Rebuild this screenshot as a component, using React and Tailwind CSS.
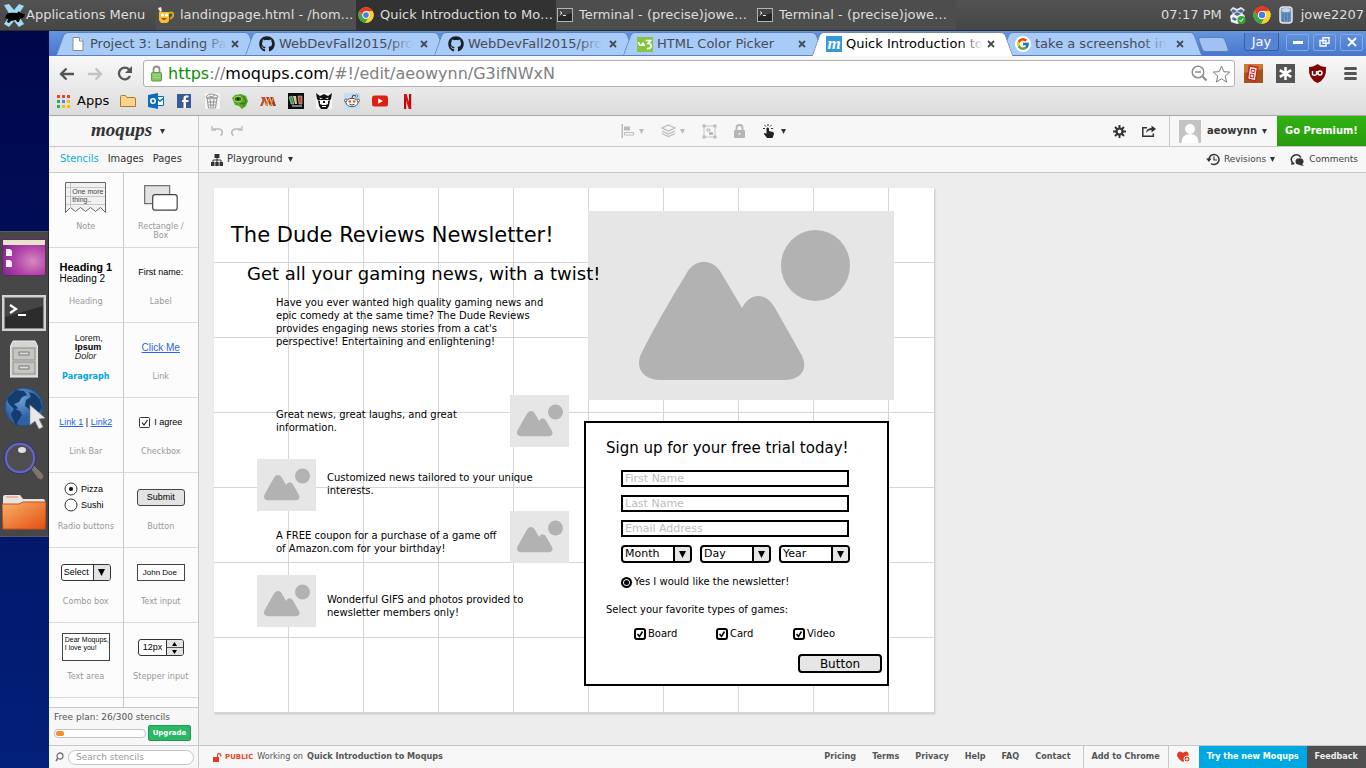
import React from "react";
import { FaGithub } from "react-icons/fa";
import { FcGoogle } from "react-icons/fc";

/* ---------- shared drawings ---------- */

function ChromeLogo({ size }) {
  return (
    <svg width={size} height={size} viewBox="0 0 48 48" aria-hidden="true">
      <circle cx="24" cy="24" r="23" fill="#fbd02e" />
      <path d="M4 12.5A23 23 0 0 1 44 12.5L24 13A11 11 0 0 0 14 28Z" fill="#e2382b" />
      <path d="M4 12.5A23 23 0 0 0 22 47L33 30A11 11 0 0 1 14 29.500Z" fill="#3fa548" />
      <path d="M24 13H44A23 23 0 0 1 22 47L33.500 29.500A11 11 0 0 0 24 13Z" fill="#fbd02e" />
      <circle cx="24" cy="24" r="11" fill="#fff" />
      <circle cx="24" cy="24" r="8.500" fill="#3f7fe0" />
    </svg>
  );
}

function TerminalIcon() {
  return (
    <svg width="16" height="14" viewBox="0 0 16 14" aria-hidden="true">
      <rect x=".5" y=".5" width="15" height="13" fill="#262626" stroke="#b4b4b4" />
      <path d="M1 1h14v4L1 9z" fill="#444" />
      <path d="M3 3.500l2 1.500-2 1.500M6 7.500h3" stroke="#e8e8e8" fill="none" />
    </svg>
  );
}

function Caret({ className = "text-[#333]" }) {
  return (
    <svg className={className} width="5" height="5" viewBox="0 0 5 5" aria-hidden="true">
      <path d="M0 0h5L2.500 5z" fill="currentColor" />
    </svg>
  );
}

/* ---------- desktop panel ---------- */

function Taskbar() {
  return (
    <header className="flex h-[31px] shrink-0 items-center bg-linear-to-b from-[#525252] to-[#464646] border-b border-[#2c2c2c] text-[13px] text-[#dedede]">
      <button className="flex h-full w-[156px] items-center gap-px pl-[3px] whitespace-nowrap">
        <svg width="22" height="23" viewBox="0 0 22 23" aria-hidden="true">
          <path d="M1 1l5-1 5 6 5-6 5 2-6 9 6 9-5 3-5-6-5 6-5-3 6-9z" fill="#9fdcf2" />
          <path d="M3 11c3-3 7-2 11-2l2-2 1 2 5 1-1 3-4 2-1 3h-2l-1-2-5 1-2 2-2-1 1-3-3-1z" fill="#050505" />
        </svg>
        Applications Menu
      </button>
      <button className="flex h-full w-[200px] items-center gap-[6px] bg-[#4f4f4f] pl-px whitespace-nowrap">
        <svg width="17" height="17" viewBox="0 0 17 17" aria-hidden="true">
          <path d="M12 6c5-2 6 3 1 6" stroke="#d9a717" strokeWidth="2" fill="none" />
          <path d="M2 5h10v9l-2 2H4l-2-3z" fill="#f2c12e" />
          <path d="M1 1l3-1 1 4-2 1z" fill="#f6f0d8" />
          <circle cx="5.500" cy="8" r="1.500" fill="#fff" /><circle cx="9.500" cy="8" r="1.500" fill="#fff" />
          <path d="M4 11q3 4 6 0z" fill="#c8322a" />
        </svg>
        landingpage.html - /hom…
      </button>
      <button className="flex h-full w-[200px] items-center gap-[6px] bg-[#323232] pl-[2px] whitespace-nowrap">
        <ChromeLogo size={16} />
        Quick Introduction to Mo…
      </button>
      <button className="flex h-full w-[200px] items-center gap-[6px] bg-[#4d4d4d] pl-px whitespace-nowrap">
        <TerminalIcon />
        Terminal - (precise)jowe…
      </button>
      <button className="flex h-full w-[200px] items-center gap-[6px] bg-[#4d4d4d] pl-px whitespace-nowrap">
        <TerminalIcon />
        Terminal - (precise)jowe…
      </button>
      <div className="ml-auto flex items-center gap-[7px] pr-[2px] whitespace-nowrap">
        <span>07:17 PM</span>
        <svg width="17" height="19" viewBox="0 0 17 19" aria-hidden="true">
          <path d="M4 1l4 2 4-2 4 3-3 3 3 3-2 6-6 2-6-2-1-6 3-3-3-3z" fill="#eee" />
          <path d="M4 3l4 2-3 2-3-2zM12 3l3 2-3 2-4-2zM5 8l3-2 4 2-4 2zM4 11l4 2-2 2-3-2z" fill="#4b6b93" />
          <circle cx="12.500" cy="14" r="4" fill="#35a535" />
          <path d="M10.500 14l1.500 1.500 2.500-3" stroke="#fff" fill="none" />
        </svg>
        <ChromeLogo size={18} />
        <svg className="mx-px" width="14" height="18" viewBox="0 0 14 18" aria-hidden="true">
          <rect x="1" y="1" width="12" height="16" rx="3" fill="#6f94c4" stroke="#e6e6e6" strokeWidth="1.500" />
          <ellipse cx="7" cy="4" rx="4.500" ry="2" fill="#c9d8ec" />
          <path d="M4 7v8M7 7v8M10 7v8" stroke="#44689b" />
        </svg>
        <span>jowe2207</span>
      </div>
    </header>
  );
}

function Dock() {
  return (
    <nav className="absolute top-[200px] left-0 flex h-[306px] w-[49px] flex-col items-center border-y border-r border-[#5a5a5a] border-r-[#2b2b2b] bg-[#474747]">
      <svg className="mt-[7px]" width="44" height="38" viewBox="0 0 44 38" aria-hidden="true">
        <defs>
          <radialGradient id="dk1" cx=".7" cy=".6" r=".8"><stop offset="0" stopColor="#d987c0" /><stop offset=".5" stopColor="#b144a8" /><stop offset="1" stopColor="#7d2786" /></radialGradient>
        </defs>
        <rect x=".5" y=".5" width="43" height="36" rx="2" fill="url(#dk1)" stroke="#6b2370" />
        <path d="M1 1h42v5H1z" fill="#e9e4c9" />
        <path d="M4 10h4l2 2v5H4zM4 21h4l2 2v5H4z" fill="#fbeef8" />
      </svg>
      <svg className="mt-[18px]" width="44" height="37" viewBox="0 0 44 37" aria-hidden="true">
        <rect x="1" y="1" width="42" height="34" fill="#2c2c2c" stroke="#d3d3d3" strokeWidth="2" />
        <rect x="2.500" y="2.500" width="39" height="31" fill="none" stroke="#8c8c8c" />
        <path d="M3 3h38v8L3 22z" fill="#454545" />
        <path d="M8 10l6 4-6 4M16 20h8" stroke="#fff" strokeWidth="2.200" fill="none" />
      </svg>
      <svg className="mt-[8px]" width="28" height="38" viewBox="0 0 28 38" aria-hidden="true">
        <path d="M3 1h22l3 6v30H0V7z" fill="#d4d5d0" stroke="#efefec" />
        <rect x="3" y="8" width="22" height="12" fill="#c5c6c1" stroke="#8b8c88" />
        <rect x="3" y="22" width="22" height="12" fill="#c5c6c1" stroke="#8b8c88" />
        <path d="M9 12h10v3H9zM9 26h10v3H9z" fill="#dcdcd8" stroke="#777" />
      </svg>
      <svg className="mt-[9px] ml-[2px]" width="42" height="43" viewBox="0 0 42 43" aria-hidden="true">
        <defs><radialGradient id="dk2" cx=".4" cy=".3"><stop offset="0" stopColor="#6d9fd4" /><stop offset="1" stopColor="#2d61a3" /></radialGradient></defs>
        <circle cx="20" cy="20" r="19" fill="url(#dk2)" stroke="#214c86" />
        <path d="M6 8l6-5 8 1 3 4-5 2-3 5-5 2 4 4-3 2-6-6-2-5zM10 22l6 2 2 4-4 6-2 5-3-7-2-5zM25 5l6 2 5 6 2 8-4 5-6 2-3-6-4-3 1-6 5-3z" fill="#153d6c" />
        <path d="M26 18v20l5-4 4 8 4-2-4-8 6-1z" fill="#e8e8e8" stroke="#8b8b8b" strokeWidth=".7" />
      </svg>
      <svg className="mt-[11px]" width="42" height="42" viewBox="0 0 42 42" aria-hidden="true">
        <path d="M27 27l4-3 9 9q2 3 0 5-2 2-5 0z" fill="#7c766c" stroke="#45413b" />
        <circle cx="17" cy="17" r="14.500" fill="#4e4e50" stroke="#6464b8" strokeWidth="3" />
        <circle cx="17" cy="17" r="16" fill="none" stroke="#2b2f78" />
        <ellipse cx="19" cy="9" rx="4" ry="3" fill="#f2f2f2" opacity=".9" />
      </svg>
      <svg className="mt-[11px]" width="44" height="36" viewBox="0 0 44 36" aria-hidden="true">
        <defs><linearGradient id="dk3" x1="0" y1="0" x2="1" y2="1"><stop offset="0" stopColor="#f9b06c" /><stop offset="1" stopColor="#e2500f" /></linearGradient></defs>
        <path d="M1 3q0-2 2-2h15l3 4h20q2 0 2 2v8H1z" fill="#e9e4df" />
        <path d="M4 3h12" stroke="#ee8d5e" />
        <path d="M0 10h17l4-2h23l-1 27H1z" fill="url(#dk3)" stroke="#c7501a" />
      </svg>
    </nav>
  );
}

/* ---------- browser chrome ---------- */

const TABS = [
  { icon: "page", label: "Project 3: Landing Pa" },
  { icon: "github", label: "WebDevFall2015/pro" },
  { icon: "github", label: "WebDevFall2015/pro" },
  { icon: "w3", label: "HTML Color Picker", whole: true },
  { icon: "moqups", label: "Quick Introduction to", active: true },
  { icon: "google", label: "take a screenshot in" },
];

function Favicon({ kind }) {
  if (kind === "github") return <FaGithub size={16} color="#1b1f27" />;
  if (kind === "google")
    return <span className="rounded-full bg-white p-px"><FcGoogle size={14} /></span>;
  if (kind === "w3")
    return (
      <svg width="16" height="15" viewBox="0 0 16 15" aria-hidden="true">
        <rect width="16" height="15" fill="#86c440" />
        <path d="M1.500 5q.5 3.500 2.500 3.500T6 5.500q.3 3 2 3M8.500 3.500h5L11 6.500q3.500 0 3.200 3-.5 2.500-4.200 2" stroke="#fff" strokeWidth="1.700" fill="none" />
      </svg>
    );
  if (kind === "moqups")
    return (
      <span className="flex size-4 items-center justify-center bg-[#3498db] font-['Liberation_Serif',serif] text-[17px] leading-[12px] font-bold italic text-white">m</span>
    );
  return (
    <svg width="16" height="16" viewBox="0 0 16 16" aria-hidden="true">
      <path d="M3 1.500h6.500L13 5v9.500H3z" fill="#fff" stroke="#8a8a8a" />
      <path d="M9.500 1.500V5H13" fill="#eee" stroke="#8a8a8a" />
    </svg>
  );
}

function BrowserTab({ tab }) {
  const edge = tab.active
    ? "before:bg-white before:border-[#6d86b0] after:bg-white after:border-[#6d86b0] text-black z-10"
    : "before:bg-[#a9cbf7] before:border-b before:border-[#5c80bd] after:bg-[#a9cbf7] after:border-b after:border-[#5c80bd] text-[#454c57]";
  const fade = tab.active ? "to-white" : "to-[#a9cbf7]";
  return (
    <div
      className={`relative flex h-[24px] w-[189px] shrink-0 items-center pl-[12px] pr-[8px] before:absolute before:inset-y-0 before:left-[2px] before:w-[60%] before:-skew-x-[20deg] before:rounded-tl-[4px] before:border-t before:border-l before:content-[''] after:absolute after:inset-y-0 after:right-[-6px] after:w-[60%] after:skew-x-[20deg] after:rounded-tr-[4px] after:border-t after:border-r after:content-[''] ${edge}`}
    >
      <a href="#tab" className="relative z-10 flex min-w-0 flex-1 items-center gap-[4px]">
        <span className="flex w-4 shrink-0 justify-center"><Favicon kind={tab.icon} /></span>
        <span className="relative text-[13px] whitespace-nowrap">
          {tab.label}
          {!tab.whole && <span className={`absolute inset-y-0 right-0 w-[24px] bg-linear-to-r from-transparent ${fade}`} />}
        </span>
      </a>
      <button aria-label="Close tab" className="relative z-10">
        <svg width="8" height="8" viewBox="0 0 8 8" aria-hidden="true"><path d="M1 1l6 6M7 1L1 7" stroke="#444b55" strokeWidth="1.800" /></svg>
      </button>
    </div>
  );
}

function TabStrip() {
  return (
    <div className="flex h-[25px] shrink-0 items-end overflow-hidden bg-linear-to-b from-[#6595dd] to-[#4876cb] pl-[9px]">
      {TABS.map((t, i) => <BrowserTab key={i} tab={t} />)}
      <button aria-label="New tab" className="mb-[4px] ml-[8px] h-[15px] w-[27px] skew-x-[20deg] rounded-[3px] border border-[#5c80bd] bg-[#9fc2f2]" />
      <div className="mb-[5px] ml-auto flex items-center gap-[4px] pr-[3px]">
        <button className="mr-[3px] h-[18px] w-[35px] rounded-b-[3px] border border-t-0 border-[#365ea8] bg-[#5683d2] text-[13px] leading-[16px] text-white">Jay</button>
        <button aria-label="Minimize" className="flex h-[17px] w-[23px] items-center justify-center rounded-[2px] border border-[#83a8e6]">
          <svg width="10" height="3" aria-hidden="true"><path d="M0 0h10v3H0z" fill="#fff" /></svg>
        </button>
        <button aria-label="Restore" className="flex h-[17px] w-[23px] items-center justify-center rounded-[2px] border border-[#83a8e6]">
          <svg width="11" height="10" viewBox="0 0 11 10" aria-hidden="true"><path d="M4 .75h6v5.500H4zM1 3.500h6V9H1z" stroke="#fff" strokeWidth="1.300" fill="#5685d6" /></svg>
        </button>
        <button aria-label="Close" className="flex h-[17px] w-[23px] items-center justify-center rounded-[2px] border border-[#83a8e6]">
          <svg width="10" height="10" viewBox="0 0 10 10" aria-hidden="true"><path d="M1 1l8 8M9 1L1 9" stroke="#fff" strokeWidth="1.800" /></svg>
        </button>
      </div>
    </div>
  );
}

function AddressRow() {
  return (
    <div className="flex items-center pt-[4px] pl-[10px] pr-[8px]">
      <button aria-label="Back" className="w-[29px]">
        <svg width="15" height="14" viewBox="0 0 15 14" aria-hidden="true"><path d="M7.500 1.500L2 7l5.500 5.500M2 7h13" stroke="#555" strokeWidth="2.400" fill="none" /></svg>
      </button>
      <button aria-label="Forward" className="w-[29px]">
        <svg width="15" height="14" viewBox="0 0 15 14" aria-hidden="true"><path d="M7.500 1.500L13 7l-5.500 5.500M13 7H0" stroke="#c2c2c2" strokeWidth="2.400" fill="none" /></svg>
      </button>
      <button aria-label="Reload" className="w-[26px]">
        <svg width="16" height="15" viewBox="0 0 16 15" aria-hidden="true">
          <path d="M12 3.500A5.800 5.800 0 1 0 13 10" stroke="#555" strokeWidth="2.300" fill="none" />
          <path d="M15 0v7H8z" fill="#555" />
        </svg>
      </button>
      <div className="flex h-[27px] flex-1 items-center rounded-[3px] border border-[#b1b1b1] bg-white pr-[3px] pl-[6px]">
        <svg width="13" height="17" viewBox="0 0 13 17" aria-hidden="true">
          <path d="M3.500 8V4.500a3 3 0 0 1 6 0V8" stroke="#8f8f8f" strokeWidth="1.800" fill="none" />
          <rect x="1.500" y="7.500" width="10" height="8.500" rx="1" fill="#86c565" stroke="#5f9c42" />
          <path d="M3 10h7M3 12.500h7" stroke="#a6d98c" />
        </svg>
        <div className="ml-[5px] flex-1 text-[16px] leading-[20px] whitespace-nowrap text-[#808080]">
          <span className="text-[#0a9000]">https</span>://<span className="text-black">moqups.com</span>/#!/edit/aeowynn/G3ifNWxN
        </div>
        <svg className="mr-[4px]" width="17" height="17" viewBox="0 0 17 17" aria-hidden="true">
          <circle cx="7" cy="7" r="5.800" stroke="#8e8e8e" strokeWidth="1.500" fill="none" />
          <path d="M11.500 11.500l4 4" stroke="#8e8e8e" strokeWidth="2.200" /><path d="M4 7h6" stroke="#8e8e8e" strokeWidth="1.500" />
        </svg>
        <svg width="19" height="18" viewBox="0 0 19 18" aria-hidden="true">
          <path d="M9.500 1l2.300 5.700 6 .4-4.600 4 1.500 6-5.200-3.300L4.300 17l1.500-6-4.600-4 6-.3z" stroke="#7d7d7d" fill="#fff" strokeLinejoin="round" />
        </svg>
      </div>
      <div className="flex items-center gap-[13px] pl-[9px]">
        <svg width="19" height="19" viewBox="0 0 19 19" aria-hidden="true">
          <path d="M0 0h19v19H0z" fill="#a0561b" /><path d="M0 0h19v5L0 9z" fill="#c67a32" />
          <path d="M5.500 2l8 1.500L11.500 17l-8-2z" fill="#fff" stroke="#d8201c" strokeWidth="1.600" />
          <path d="M7.500 5l3.500.6-.5 3-3.500-.6zM6.500 10l3.500.6-.6 3.400-3.400-.7z" fill="#fff" stroke="#d8201c" />
        </svg>
        <svg width="19" height="19" viewBox="0 0 19 19" aria-hidden="true">
          <path d="M0 0h19v19H0z" fill="#555" />
          <path d="M9.500 3v13M3.800 6.200l11.400 6.600M15.200 6.200L3.800 12.800" stroke="#fff" strokeWidth="2.600" />
        </svg>
        <svg width="19" height="19" viewBox="0 0 19 19" aria-hidden="true">
          <path d="M9.500 0Q13 3 18 3q1 12-8.500 16Q0 15 1 3q5 0 8.500-3z" fill="#7f0505" />
          <path d="M4.500 7v3.500q1.500 1.500 4 0V7M9 10.500V7" stroke="#fff" strokeWidth="1.400" fill="none" />
          <circle cx="12" cy="9" r="2" stroke="#fff" strokeWidth="1.400" fill="none" />
        </svg>
        <button aria-label="Browser menu" className="ml-[3px] flex w-[15px] flex-col items-center gap-[2px]">
          <span className="h-[3px] w-[13px] rounded-sm bg-[#555]" />
          <span className="h-[3px] w-[13px] rounded-sm bg-[#555]" />
          <span className="h-[3px] w-[13px] rounded-sm bg-[#555]" />
        </button>
      </div>
    </div>
  );
}

const APP_DOTS = ["#ea4335", "#ea4335", "#ea4335", "#34a853", "#4285f4", "#fbbc05", "#34a853", "#fbbc05", "#fbbc05"];

function Bookmarks() {
  return (
    <nav className="flex items-center gap-[12px] pt-[6px] pl-[8px] text-[13px] leading-[16px] text-black">
      <a href="#apps" className="mr-[-1px] flex items-center gap-[7px]">
        <svg width="13" height="13" viewBox="0 0 13 13" aria-hidden="true">
          {APP_DOTS.map((c, i) => (
            <rect key={i} x={(i % 3) * 5} y={Math.floor(i / 3) * 5} width="3" height="3" fill={c} />
          ))}
        </svg>
        Apps
      </a>
      <svg width="16" height="16" viewBox="0 0 16 16" aria-hidden="true"><path d="M.5 3.500q0-1 1-1h4l1.500 2h7q1.500 0 1.500 1.500v7.500H.5z" fill="#fbd48a" stroke="#a67c3c" /></svg>
      <svg width="16" height="16" viewBox="0 0 16 16" aria-hidden="true">
        <path d="M7.500 3.500h8v9h-8z" fill="#fff" stroke="#0a6cbd" /><path d="M8 5l4 3 4-3" stroke="#0a6cbd" strokeWidth="1.500" fill="none" />
        <path d="M0 2l10-2v16L0 14z" fill="#0a6cbd" /><circle cx="5" cy="8" r="2.200" stroke="#fff" strokeWidth="1.600" fill="none" />
      </svg>
      <svg width="16" height="16" viewBox="0 0 16 16" aria-hidden="true"><path d="M1 1h14v14H1z" fill="#3b5998" /><path d="M10 15V9h2.500V7H10V5.500q0-1 1-1h1.500v-2H10q-2.500 0-2.500 2.500v2H6v2h1.500v6z" fill="#fff" /></svg>
      <svg width="16" height="16" viewBox="0 0 16 16" aria-hidden="true">
        <path d="M1 0h15v16H1z" fill="#f4f4f4" />
        <path d="M3 5l1.500 10h7L13 5zM2 4q2-4 6-3t6 2l-1 2H3zM6 6l1 8M10 6L9 14M4 9h8M4.500 12h7M5 3l3 1 3-2" stroke="#8a8a8a" strokeWidth=".9" fill="none" />
      </svg>
      <svg width="16" height="16" viewBox="0 0 16 16" aria-hidden="true">
        <path d="M0 5l3-3 6-1 5 2 2 5-2 5-4 3-3-3-4-1z" fill="#58a52a" />
        <ellipse cx="6" cy="6" rx="4" ry="2.800" fill="#2f7012" stroke="#a5dd68" /><circle cx="6" cy="6" r="1.200" fill="#0d2f04" />
        <path d="M11 3l3 5-3 5M8 11l4-1" stroke="#2f7012" fill="none" />
      </svg>
      <svg width="16" height="16" viewBox="0 0 16 16" aria-hidden="true">
        <path d="M1 4h4l3 9H6L4.500 8 2.500 13H0l2.500-6z" fill="#c0532a" /><path d="M6 4h3l3 9h-2zM10 4h3l3 9h-3z" fill="#a93a1b" /><path d="M9 5L6.500 13M13 5l-2.500 8" stroke="#e59a3c" strokeWidth="1.200" />
      </svg>
      <svg width="16" height="16" viewBox="0 0 16 16" aria-hidden="true"><path d="M0 0h16v16H0z" fill="#0c0c0c" /><path d="M1 4l3-1 2 8H3z" fill="#3e9a5e" stroke="#cfe6d0" strokeWidth=".5" /><path d="M5 3h3l1 8H7z" fill="#d9c9a4" /><path d="M10 3h4v8h-3z" fill="#a9542d" stroke="#e8dcc8" strokeWidth=".5" /><path d="M4 13h10" stroke="#eee" /></svg>
      <svg width="16" height="16" viewBox="0 0 16 16" aria-hidden="true">
        <path d="M0 0h16v16H0z" fill="#f5f5f5" />
        <path d="M0 0l4 3 4-2 4 2 4-3-1 6-1 1H2L1 6z" fill="#111" />
        <path d="M2 7l2 1v3l2 1h4l2-1V8l2-1-1 6-2 3H5l-2-3z" fill="#111" />
        <path d="M3.500 4.500L7 6H4zM12.500 4.500L9 6h3z" fill="#fff" /><path d="M7 8h2v2H7z" fill="#111" /><path d="M6 13.500h4" stroke="#fff" />
      </svg>
      <svg width="16" height="16" viewBox="0 0 16 16" aria-hidden="true">
        <path d="M0 0h16v16H0z" fill="#c6dff5" />
        <circle cx="2" cy="7.500" r="1.500" fill="#fff" stroke="#444" strokeWidth=".8" /><circle cx="14" cy="7.500" r="1.500" fill="#fff" stroke="#444" strokeWidth=".8" />
        <ellipse cx="8" cy="9.500" rx="6" ry="4.200" fill="#fff" stroke="#444" strokeWidth=".9" /><path d="M8 5l1-3 3 1" stroke="#444" fill="none" />
        <circle cx="12.500" cy="3" r="1.300" fill="#fff" stroke="#444" strokeWidth=".7" /><circle cx="5.800" cy="8.500" r="1.300" fill="#f0471d" /><circle cx="10.200" cy="8.500" r="1.300" fill="#f0471d" />
        <path d="M5.500 11.300q2.500 1.500 5 0" stroke="#444" fill="none" />
      </svg>
      <svg width="16" height="16" viewBox="0 0 16 16" aria-hidden="true"><rect y="2.500" width="16" height="11" rx="2.500" fill="#dc2018" /><path d="M6.200 5.200v5.600L11 8z" fill="#fff" /></svg>
      <svg width="16" height="16" viewBox="0 0 16 16" aria-hidden="true"><path d="M4 1h2.200v15H4zM9 1h2.200v15H9z" fill="#b3060e" /><path d="M4 1h2.500l4.700 15H8.700z" fill="#e50914" /></svg>
    </nav>
  );
}

/* ---------- sidebar ---------- */

function StencilArt({ kind }) {
  switch (kind) {
    case "note":
      return (
        <span className="relative block h-[32px] w-[41px] pt-[6px] pl-[7px] text-left text-[7px] leading-[8px] text-[#444]">
          <svg className="absolute inset-0" width="41" height="32" viewBox="0 0 41 32" aria-hidden="true">
            <path d="M.5.500h40v30l-5-5-5 4-5-4-5 4-5-4-5 4-5-4-5 5z" fill="#f1f1f1" stroke="#666" />
            <path d="M1 5.500h39M1 14.500h39M1 22.500h39M5.500 1v25" stroke="#c6c6c6" />
          </svg>
          <span className="relative block whitespace-nowrap">One more</span>
          <span className="relative block">thing..</span>
        </span>
      );
    case "rect":
      return (
        <svg width="34" height="26" viewBox="0 0 34 26" aria-hidden="true">
          <rect x=".7" y=".7" width="25" height="18" fill="#e3e3e3" stroke="#555" />
          <rect x="8.700" y="9.700" width="24.500" height="15.500" rx="2.500" fill="#fff" stroke="#444" strokeWidth="1.200" />
        </svg>
      );
    case "heading":
      return (
        <span className="block text-left text-[10px] leading-[11px] text-black">
          <b className="block text-[11px] whitespace-nowrap">Heading 1</b>Heading 2
        </span>
      );
    case "label":
      return <span className="text-[9px] whitespace-nowrap text-black">First name:</span>;
    case "paragraph":
      return (
        <span className="block pl-[6px] text-left text-[9px] leading-[9px] text-[#222]">
          Lorem,<b className="block text-black">Ipsum</b><i>Dolor</i>
        </span>
      );
    case "link":
      return <span className="text-[10px] text-[#2a62e8] underline">Click Me</span>;
    case "linkbar":
      return (
        <span className="text-[9px] whitespace-nowrap text-black">
          <span className="text-[#2a62e8] underline">Link 1</span> | <span className="text-[#2a62e8] underline">Link2</span>
        </span>
      );
    case "checkbox":
      return (
        <span className="flex items-center gap-[4px] text-[9px] whitespace-nowrap text-black">
          <svg width="11" height="11" viewBox="0 0 11 11" aria-hidden="true"><rect x=".5" y=".5" width="10" height="10" rx="1" fill="#fff" stroke="#333" /><path d="M3 5.500L5 8l3.500-5" stroke="#222" strokeWidth="1.200" fill="none" /></svg>
          I agree
        </span>
      );
    case "radio":
      return (
        <span className="-mt-[2px] flex flex-col gap-[2px] pr-[4px] text-left text-[9px] leading-[14px] text-black">
          <span className="flex items-center gap-[3px]"><svg width="14" height="14" viewBox="0 0 14 14" aria-hidden="true"><circle cx="7" cy="7" r="6" fill="#fff" stroke="#333" /><circle cx="7" cy="7" r="2" fill="#000" /></svg>Pizza</span>
          <span className="flex items-center gap-[3px]"><svg width="14" height="14" viewBox="0 0 14 14" aria-hidden="true"><circle cx="7" cy="7" r="6" fill="#fff" stroke="#333" /></svg>Sushi</span>
        </span>
      );
    case "button":
      return <span className="block h-[17px] w-[48px] rounded-[3px] border border-[#444] bg-[#e3e3e3] text-center text-[9px] leading-[15px] text-black">Submit</span>;
    case "combo":
      return (
        <span className="flex h-[17px] w-[50px] overflow-hidden rounded-[3px] border border-[#333] bg-white text-[9px] leading-[15px] text-black">
          <span className="flex-1 pl-[2px] text-left">Select</span>
          <span className="flex w-[17px] items-center justify-center border-l border-[#333] bg-[#e3e3e3]"><svg width="7" height="7" viewBox="0 0 7 7" aria-hidden="true"><path d="M0 0h7L3.500 7z" /></svg></span>
        </span>
      );
    case "input":
      return <span className="block h-[17px] w-[48px] border border-[#444] bg-white pl-[5px] text-left text-[8px] leading-[15px] whitespace-nowrap text-black">John Doe</span>;
    case "area":
      return <span className="-mt-[2px] block h-[28px] w-[48px] border border-[#444] bg-white pt-[2px] pl-[2px] text-left text-[7px] leading-[8px] whitespace-nowrap text-black">Dear Moqups,<br />I love you!</span>;
    default:
      return (
        <span className="flex h-[17px] w-[46px] overflow-hidden rounded-[3px] border border-[#333] bg-white text-[9px] leading-[15px] text-black">
          <span className="flex-1 pl-[4px] text-left">12px</span>
          <span className="flex w-[17px] flex-col items-center justify-evenly border-l border-[#333] bg-[#e3e3e3]">
            <svg width="5" height="4" viewBox="0 0 5 4" aria-hidden="true"><path d="M0 4h5L2.500 0z" /></svg>
            <span className="h-px w-full bg-[#555]" />
            <svg width="5" height="4" viewBox="0 0 5 4" aria-hidden="true"><path d="M0 0h5L2.500 4z" /></svg>
          </span>
        </span>
      );
  }
}

const STENCILS = [
  ["note", "Note"], ["rect", "Rectangle / Box"], ["heading", "Heading"], ["label", "Label"],
  ["paragraph", "Paragraph"], ["link", "Link"], ["linkbar", "Link Bar"], ["checkbox", "Checkbox"],
  ["radio", "Radio buttons"], ["button", "Button"], ["combo", "Combo box"], ["input", "Text input"],
  ["area", "Text area"], ["stepper", "Stepper input"],
];

function Sidebar() {
  return (
    <aside className="flex w-[150px] shrink-0 flex-col border-r border-[#c8c8c8] bg-[#f7f7f7]">
      <button className="flex h-[31px] shrink-0 items-center justify-center gap-[8px] border-b border-[#c8c8c8] pl-[9px]">
        <span className="pb-[2px] font-['Liberation_Serif',serif] text-[19px] leading-[20px] font-bold italic text-[#333]">moqups</span>
        <Caret />
      </button>
      <div className="flex h-[26px] shrink-0 items-center gap-[9px] border-b border-[#c8c8c8] pl-[11px] font-['DejaVu_Sans_Condensed','DejaVu_Sans',sans-serif] text-[11px] text-[#333]">
        <button className="text-[#0fa8e0]">Stencils</button>
        <button>Images</button>
        <button>Pages</button>
      </div>
      <div className="min-h-0 flex-1 overflow-hidden bg-[#fcfcfc]">
        <div className="grid grid-cols-2">
          {STENCILS.map(([kind, label]) => (
            <button key={kind} className="flex h-[75px] flex-col items-center border-b border-[#dadada] odd:border-r odd:border-r-[#c8c8c8]">
              <span className="flex h-[49px] items-center justify-center font-['Liberation_Sans',sans-serif]"><StencilArt kind={kind} /></span>
              <span className={kind === "paragraph"
                ? "w-[54px] text-center font-['DejaVu_Sans_Condensed','DejaVu_Sans',sans-serif] text-[9px] leading-[9px] font-bold text-[#00a7df]"
                : "max-w-[62px] text-center font-['DejaVu_Sans_Condensed','DejaVu_Sans',sans-serif] text-[9px] leading-[9px] text-[#999]"}>{label}</span>
            </button>
          ))}
          <span className="h-[20px] border-r border-[#c8c8c8]" />
        </div>
      </div>
      <div className="h-[38px] shrink-0 border-t border-[#c8c8c8] px-[5px] pt-[3px] text-[9px] text-[#555]">
        <div className="leading-[12px] whitespace-nowrap">Free plan: 26/300 stencils</div>
        <div className="mt-[2px] flex items-center gap-[2px]">
          <div className="h-[9px] flex-1 rounded-[4px] border border-[#c4c4c4] bg-white p-px"><div className="h-full w-[8px] rounded-[2px] bg-[#f78f28]" /></div>
          <button className="mr-[2px] h-[16px] w-[43px] rounded-[2px] border border-[#219a53] bg-[#2bb766] text-[7px] leading-[12px] font-bold text-white">Upgrade</button>
        </div>
      </div>
      <label className="flex h-[23px] shrink-0 items-center gap-[4px] border-t border-[#c8c8c8] pr-[4px] pl-[6px]">
        <svg width="9" height="10" viewBox="0 0 9 10" aria-label="Search"><circle cx="5" cy="4" r="3" stroke="#777" strokeWidth="1.300" fill="none" /><path d="M3 6L1 9" stroke="#777" strokeWidth="1.600" /></svg>
        <input placeholder="Search stencils" className="h-[15px] min-w-0 flex-1 rounded-full border border-[#c4c4c4] bg-white px-[7px] text-[9px] outline-none placeholder:text-[#999]" />
      </label>
    </aside>
  );
}

/* ---------- editor bars ---------- */

function EditorBar() {
  return (
    <div className="flex h-[31px] shrink-0 items-center border-b border-[#c8c8c8] bg-[#f7f7f7] pl-[12px]">
      <div className="flex w-[410px] shrink-0 gap-[8px]">
        <button aria-label="Undo"><svg width="12" height="12" viewBox="0 0 12 12" aria-hidden="true"><path d="M2 4h5.500a3.500 3.500 0 0 1 2 6.500" stroke="#bbb" strokeWidth="1.600" fill="none" /><path d="M1 1v4h4" stroke="#bbb" strokeWidth="1.300" fill="none" /></svg></button>
        <button aria-label="Redo"><svg width="12" height="12" viewBox="0 0 12 12" aria-hidden="true"><path d="M10 4H4.500a3.500 3.500 0 0 0-2 6.500" stroke="#bbb" strokeWidth="1.600" fill="none" /><path d="M11 1v4H7" stroke="#bbb" strokeWidth="1.300" fill="none" /></svg></button>
      </div>
      <div className="flex items-center">
        <button aria-label="Align" className="flex w-[40px] items-center gap-[5px]">
          <svg width="13" height="14" viewBox="0 0 13 14" aria-hidden="true"><path d="M.5 0H2v14H.5zM3 2.500h6v4H3z" fill="#bbb" /><path d="M3.500 8.500h9v2.500h-9z" stroke="#bbb" fill="none" /></svg>
          <Caret className="text-[#bbb]" />
        </button>
        <button aria-label="Arrange" className="flex w-[40px] items-center gap-[4px]">
          <svg width="15" height="14" viewBox="0 0 15 14" aria-hidden="true"><path d="M7.500 1L14 4 7.500 7 1 4zM1 7l6.500 3L14 7M1 9.500l6.500 3 6.500-3" stroke="#bbb" strokeWidth="1.200" fill="none" /></svg>
          <Caret className="text-[#bbb]" />
        </button>
        <button aria-label="Group" className="ml-px w-[32px]">
          <svg width="15" height="15" viewBox="0 0 15 15" aria-hidden="true"><path d="M2 2h11v11H2z" stroke="#c4c4c4" fill="none" /><path d="M.5.500h3v3h-3zM11.500.500h3v3h-3zM.5 11.500h3v3h-3zM11.500 11.500h3v3h-3z" fill="#bbb" /><path d="M5 5h3v2H5z" stroke="#bbb" fill="none" /><path d="M7 8h4v3H7z" fill="#bbb" /></svg>
        </button>
        <button aria-label="Lock" className="w-[29px]">
          <svg width="11" height="14" viewBox="0 0 11 14" aria-hidden="true"><rect y="6" width="11" height="8" rx="1" fill="#b5b5b5" /><path d="M2.500 7V4a3 3 0 0 1 6 0v3" stroke="#b5b5b5" strokeWidth="1.800" fill="none" /><circle cx="5.500" cy="10" r="1" fill="#f7f7f7" /></svg>
        </button>
        <button aria-label="Interactions" className="flex items-center gap-[7px]">
          <svg width="11" height="14" viewBox="0 0 11 14" aria-hidden="true"><path d="M3.500 4q1.500-1 2.500.5V7l4 1q1 .5 1 2l-1.500 4H4L1 10q0-1.500 1.300-1l1.200 1z" fill="#222" /><path d="M5 0v2M1.500 1l1.500 1.500M8.500 1L7 2.500M0 4.500h2M8 4.500h2" stroke="#333" /></svg>
          <Caret />
        </button>
      </div>
      <div className="ml-auto flex h-full items-center">
        <button aria-label="Settings" className="mr-[16px]">
          <svg width="13" height="13" viewBox="0 0 13 13" aria-hidden="true"><circle cx="6.500" cy="6.500" r="3" stroke="#333" strokeWidth="2.200" fill="none" /><path d="M6.500 0v3M6.500 10v3M0 6.500h3M10 6.500h3M2 2l2 2M9 9l2 2M11 2L9 4M4 9l-2 2" stroke="#333" strokeWidth="1.900" /></svg>
        </button>
        <button aria-label="Share" className="mr-[13px]">
          <svg width="14" height="12" viewBox="0 0 14 12" aria-hidden="true"><path d="M5 2.700H.8v8.500h10.500V8.500" stroke="#333" strokeWidth="1.500" fill="none" /><path d="M4 8q0-4.500 5.500-5V.5L14 4 9.500 7.500V5Q6 5 4 8z" fill="#333" /></svg>
        </button>
        <button className="flex h-full items-center border-l border-[#c8c8c8] pr-[10px] pl-[9px] text-[11px] font-bold text-[#333]">
          <svg className="mr-[6px]" width="22" height="23" viewBox="0 0 22 23" aria-hidden="true"><rect width="22" height="23" rx="1" fill="#c3c3c3" /><circle cx="11" cy="9" r="5" fill="#fff" /><path d="M2.500 23q0-9 8.500-9t8.500 9z" fill="#fff" /></svg>
          <span className="mr-[5px] font-['DejaVu_Sans_Condensed','DejaVu_Sans',sans-serif]">aeowynn</span>
          <Caret />
        </button>
        <button className="h-full w-[89px] bg-linear-to-b from-[#31b213] to-[#289b0e] font-['DejaVu_Sans_Condensed','DejaVu_Sans',sans-serif] text-[11px] font-bold text-white">Go Premium!</button>
      </div>
    </div>
  );
}

function PageBar() {
  return (
    <div className="flex h-[26px] shrink-0 items-center border-b border-[#c8c8c8] bg-[#f7f7f7] pr-[8px] pl-[12px] text-[9px] text-[#444]">
      <button className="flex items-center gap-[4px] font-['DejaVu_Sans_Condensed','DejaVu_Sans',sans-serif] text-[11px] text-[#333]">
        <svg width="12" height="12" viewBox="0 0 12 12" aria-hidden="true"><path d="M3.500 0h5v4h-5zM0 8h3.500v4H0zM4.300 8h3.400v4H4.300zM8.500 8H12v4H8.500z" fill="#333" /><path d="M6 4v4M2 8V6h8v2" stroke="#333" fill="none" /></svg>
        Playground
        <span className="ml-px"><Caret /></span>
      </button>
      <button className="mr-[15px] ml-auto flex items-center gap-[4px]">
        <svg width="14" height="13" viewBox="0 0 14 13" aria-hidden="true"><path d="M3 6.500a5 5 0 1 1 2 4" stroke="#333" strokeWidth="1.500" fill="none" /><path d="M0 5.500h5.500L3 9z" fill="#333" /><path d="M8 3.500v3.500h3" stroke="#333" strokeWidth="1.200" fill="none" /></svg>
        Revisions
        <Caret />
      </button>
      <button className="flex items-center gap-[5px]">
        <svg width="14" height="12" viewBox="0 0 14 12" aria-hidden="true"><path d="M3 9.500Q-.5 5 3 2q5-3 8 1.500" stroke="#333" strokeWidth="1.500" fill="none" /><path d="M1 11l1-4 3 3z" fill="#333" /><ellipse cx="9.500" cy="7.500" rx="4" ry="3.300" fill="#333" /><path d="M11 9l3 3-5-1z" fill="#333" /></svg>
        Comments
      </button>
    </div>
  );
}

function StatusBar() {
  return (
    <footer className="flex h-[23px] shrink-0 items-center border-t border-[#c8c8c8] bg-[#f7f7f7] pl-[14px] font-['DejaVu_Sans_Condensed','DejaVu_Sans',sans-serif] text-[9px] whitespace-nowrap text-[#555]">
      <svg width="9" height="9" viewBox="0 0 9 9" aria-hidden="true"><rect y="4" width="6" height="5" fill="#e03c23" /><path d="M4.500 4V2q0-1.300 1.500-1.300T7.800 2v1.500" stroke="#e03c23" strokeWidth="1.200" fill="none" /></svg>
      <span className="mr-[4px] ml-[3px] font-['DejaVu_Sans',sans-serif] text-[7px] font-bold text-[#e8452c]">PUBLIC</span>
      <span>Working on</span>
      <b className="ml-[4px]">Quick Introduction to Moqups</b>
      <nav className="ml-auto flex h-full items-center font-bold">
        <div className="flex gap-[16px] pr-[12px]">
          <a href="#pricing">Pricing</a><a href="#terms">Terms</a><a href="#privacy">Privacy</a><a href="#help">Help</a><a href="#faq">FAQ</a><a href="#contact">Contact</a>
        </div>
        <a href="#chrome" className="flex h-full items-center border-x border-[#c8c8c8] px-[8px]">Add to Chrome</a>
        <a href="#like" aria-label="Like" className="px-[8px]">
          <svg width="14" height="12" viewBox="0 0 14 12" aria-hidden="true"><path d="M6 11Q-3 5 1.500 1 4-.5 6 2q2-2.500 4.500-1Q14 5 6 11z" fill="#e03c23" /><circle cx="10" cy="8" r="3" fill="#e03c23" stroke="#f7f7f7" /><path d="M8.500 8h3M10 6.500v3" stroke="#fff" /></svg>
        </a>
        <a href="#new" className="flex h-full items-center bg-[#00a8e1] px-[8px] text-white">Try the new Moqups</a>
        <a href="#feedback" className="flex h-full items-center bg-[#505050] px-[8px] text-[#eee]">Feedback</a>
      </nav>
    </footer>
  );
}

/* ---------- mockup canvas ---------- */

const MOUNTAIN = "M22 118C4 118-4 106 2 92C15 66 30 40 46 14C55-5 75-5 84 14L103 46C111 30 127 30 136 46L162 92C170 106 163 118 145 118Z";

function LargePicture() {
  return (
    <svg className="absolute top-[23px] left-[374px]" width="306" height="189" viewBox="0 0 306 189" role="img" aria-label="Picture placeholder">
      <rect width="306" height="189" fill="#e6e6e6" />
      <path transform="translate(51 51)" d={MOUNTAIN} fill="#b2b2b2" />
      <ellipse cx="227.500" cy="54.500" rx="34.500" ry="35.500" fill="#b2b2b2" />
    </svg>
  );
}

function SmallPicture({ className }) {
  return (
    <svg className={`absolute ${className}`} width="59" height="52" viewBox="0 0 59 52" role="img" aria-label="Picture placeholder">
      <rect width="59" height="52" fill="#e6e6e6" />
      <path transform="translate(7 16) scale(.215)" d={MOUNTAIN} fill="#b2b2b2" />
      <circle cx="45.500" cy="17" r="7.500" fill="#b2b2b2" />
    </svg>
  );
}

function TextBox({ label }) {
  return <input aria-label={label} placeholder={label} className="block h-[17px] w-[228px] border-2 border-black bg-white px-[2px] text-[11px] outline-none placeholder:text-[#bdbdbd]" />;
}

function Picker({ label }) {
  return (
    <span className="relative block h-[18px] w-[71px] overflow-hidden rounded-[4px] border-2 border-black bg-white">
      <select aria-label={label} className="block h-full w-full appearance-none bg-transparent pl-[2px] text-[11px] leading-[14px] text-black outline-none"><option>{label}</option></select>
      <span className="pointer-events-none absolute inset-y-0 right-0 flex w-[17px] items-center justify-center border-l-2 border-black bg-[#e6e6e6]">
        <svg width="7" height="7" viewBox="0 0 7 7" aria-hidden="true"><path d="M0 0h7L3.500 7z" /></svg>
      </span>
    </span>
  );
}

function Tick({ label }) {
  return (
    <label className="flex items-center gap-[2px]">
      <span className="relative block size-[12px]">
        <input type="checkbox" defaultChecked className="block size-[12px] appearance-none rounded-[3px] border-2 border-black bg-white" />
        <svg className="pointer-events-none absolute inset-0" width="12" height="12" viewBox="0 0 12 12" aria-hidden="true"><path d="M3.500 6l2 2.500 3-5" stroke="#000" strokeWidth="1.500" fill="none" /></svg>
      </span>
      {label}
    </label>
  );
}

function SignupForm() {
  return (
    <form className="absolute top-[233px] left-[370px] flex w-[305px] flex-col border-2 border-black bg-white pt-[14px] pr-[5px] pb-[11px] pl-[20px] text-[10px] leading-[14px]">
      <h3 className="text-[15px] leading-[22px] whitespace-nowrap">Sign up for your free trial today!</h3>
      <div className="mt-[11px] ml-[15px] flex flex-col gap-[8px]">
        <TextBox label="First Name" />
        <TextBox label="Last Name" />
        <TextBox label="Email Address" />
        <div className="flex w-[229px] justify-between"><Picker label="Month" /><Picker label="Day" /><Picker label="Year" /></div>
        <label className="mt-[4px] flex items-center gap-[2px] whitespace-nowrap">
          <input type="radio" defaultChecked className="size-[11px] appearance-none rounded-full border-2 border-black bg-black shadow-[inset_0_0_0_1px_#fff]" />
          Yes I would like the newsletter!
        </label>
      </div>
      <p className="mt-[14px]">Select your favorite types of games:</p>
      <div className="mt-[10px] ml-[28px] grid w-[220px] grid-cols-[82px_77px_1fr]"><Tick label="Board" /><Tick label="Card" /><Tick label="Video" /></div>
      <button type="button" className="mt-[13px] h-[19px] w-[84px] self-end rounded-[4px] border-2 border-black bg-[#e6e6e6] text-[12px] leading-[14px]">Button</button>
    </form>
  );
}

function Sheet() {
  return (
    <main className="min-h-0 flex-1 overflow-hidden bg-[#ededed] pt-[15px] pl-[15px]">
      <div className="relative h-[525px] w-[720px] bg-white bg-[linear-gradient(to_right,transparent_74px,#d6d6d6_74px),linear-gradient(to_bottom,transparent_74px,#d6d6d6_74px)] bg-[size:75px_75px] text-[10px] leading-[13px] text-black shadow-[1px_1px_2px_#c4c4c4]">
        <LargePicture />
        <h1 className="absolute top-[34px] left-[17px] text-[21px] leading-[27px] whitespace-nowrap">The Dude Reviews Newsletter!</h1>
        <h2 className="absolute top-[74px] left-[33px] text-[18px] leading-[23px] whitespace-nowrap">Get all your gaming news, with a twist!</h2>
        <p className="absolute top-[108px] left-[62px] whitespace-nowrap">Have you ever wanted high quality gaming news and<br />epic comedy at the same time? The Dude Reviews<br />provides engaging news stories from a cat's<br />perspective! Entertaining and enlightening!</p>
        <p className="absolute top-[220px] left-[62px] whitespace-nowrap">Great news, great laughs, and great<br />information.</p>
        <p className="absolute top-[283px] left-[113px] whitespace-nowrap">Customized news tailored to your unique<br />interests.</p>
        <p className="absolute top-[341px] left-[62px] whitespace-nowrap">A FREE coupon for a purchase of a game off<br />of Amazon.com for your birthday!</p>
        <p className="absolute top-[405px] left-[113px] whitespace-nowrap">Wonderful GIFS and photos provided to<br />newsletter members only!</p>
        <SmallPicture className="top-[207px] left-[296px]" />
        <SmallPicture className="top-[271px] left-[43px]" />
        <SmallPicture className="top-[323px] left-[296px]" />
        <SmallPicture className="top-[387px] left-[43px]" />
        <SignupForm />
      </div>
    </main>
  );
}

export default function App() {
  return (
    <div className="flex h-screen flex-col overflow-hidden font-['DejaVu_Sans',sans-serif]">
      <Taskbar />
      <div className="flex min-h-0 flex-1">
        <div className="relative w-[49px] shrink-0 bg-linear-to-b from-[#00064a] to-[#03207a]"><Dock /></div>
        <div className="flex min-w-0 flex-1 flex-col">
          <TabStrip />
          <div className="h-[60px] shrink-0 border-b border-[#a8a8a8] bg-linear-to-b from-[#f8f8f8] to-[#dcdcdc]">
            <AddressRow />
            <Bookmarks />
          </div>
          <div className="flex min-h-0 flex-1">
            <Sidebar />
            <div className="flex min-w-0 flex-1 flex-col">
              <EditorBar />
              <PageBar />
              <Sheet />
              <StatusBar />
            </div>
          </div>
        </div>
      </div>
    </div>
  );
}
